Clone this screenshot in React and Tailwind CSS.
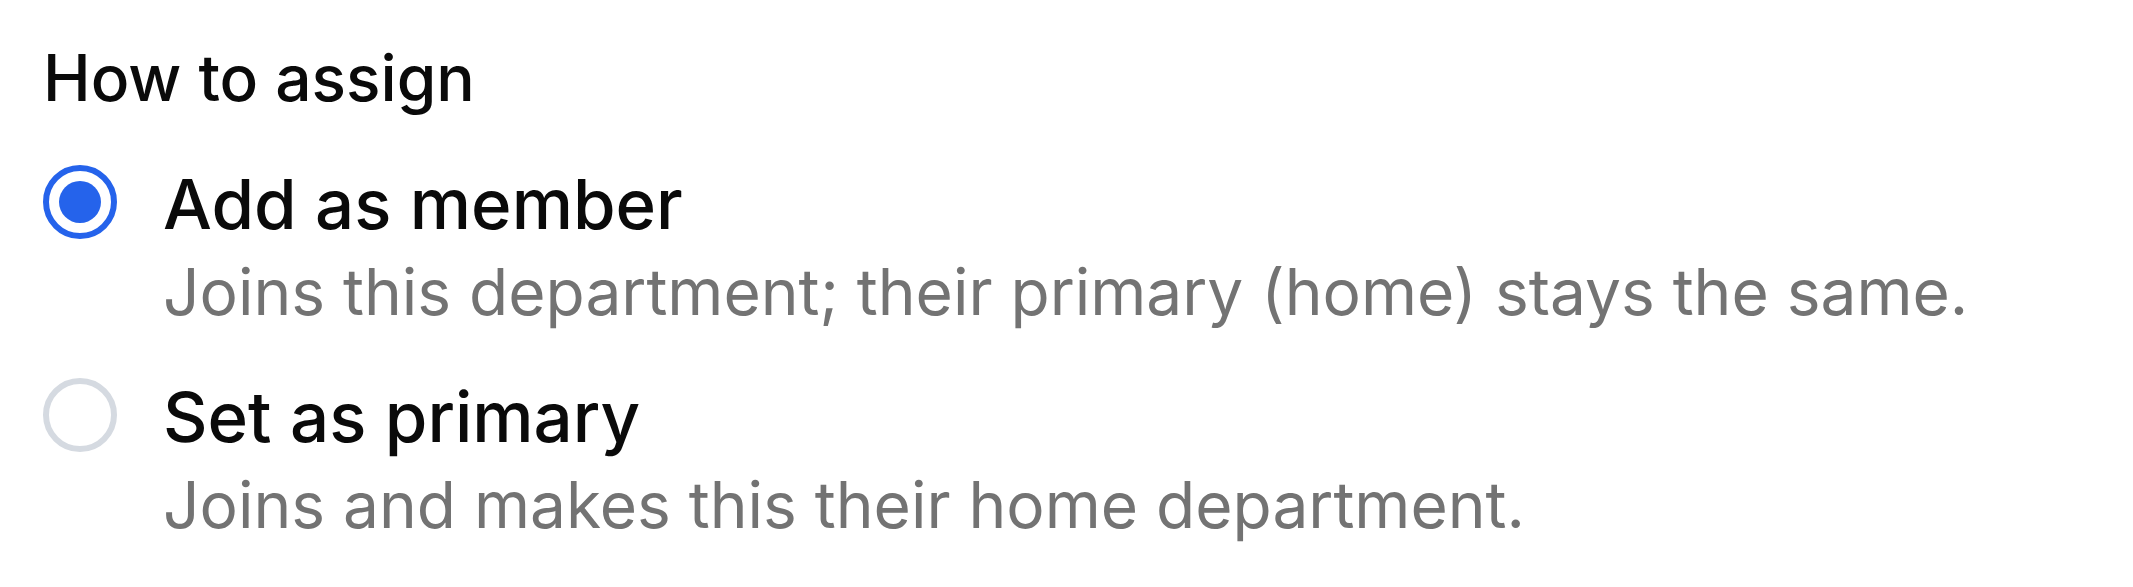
import { useState } from "react";

const options = [
  {
    value: "member",
    label: "Add as member",
    hint: "Joins this department; their primary (home) stays the same.",
  },
  {
    value: "primary",
    label: "Set as primary",
    hint: "Joins and makes this their home department.",
  },
];

function Radio({ checked }) {
  return (
    <span
      className={`mt-[5px] flex h-[74px] w-[74px] shrink-0 items-center justify-center rounded-full border-[6px] ${
        checked ? "border-[#2563eb]" : "border-[#d5dae1]"
      }`}
    >
      {checked && <span className="h-[42px] w-[42px] rounded-full bg-[#2563eb]" />}
    </span>
  );
}

export default function App() {
  const [mode, setMode] = useState("member");

  return (
    <div className="min-h-screen bg-white pl-[43px] pt-[33px] font-['Inter',sans-serif] text-[#0a0a0a]">
      <h3 className="text-[64px] font-medium leading-[90px]">How to assign</h3>

      <div className="mt-[37px] flex flex-col gap-[37px]">
        {options.map((opt) => (
          <label
            key={opt.value}
            className="flex cursor-pointer items-start gap-[46px]"
            onClick={() => setMode(opt.value)}
          >
            <Radio checked={mode === opt.value} />
            <div>
              <div className="text-[69px] font-medium leading-[88px]">{opt.label}</div>
              <div className="text-[64px] leading-[88px] text-[#737373]">{opt.hint}</div>
            </div>
          </label>
        ))}
      </div>
    </div>
  );
}
